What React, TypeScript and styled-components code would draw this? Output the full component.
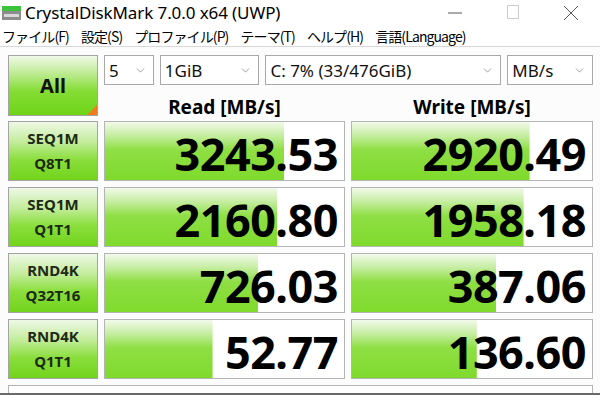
import styled, { createGlobalStyle } from 'styled-components'
import { ChevronDown } from 'lucide-react'

const GlobalStyle = createGlobalStyle`
    html, body {
        margin: 0;
        padding: 0;
        background: #fff;
    }

    body {
        font-family: "Noto Sans", "Noto Sans CJK JP", sans-serif;
        color: #000;
    }
`

const Window = styled.div`
    width: 600px;
    height: 395px;
    overflow: hidden;
    box-sizing: border-box;
    border-bottom: 2px solid #6a6a6a;
    background: #fcfcfc;
    display: flex;
    flex-direction: column;
`

const TitleBar = styled.div`
    height: 26px;
    display: flex;
    align-items: center;
    background: #fff;
    padding-left: 2px;
`

const AppIcon = styled.svg`
    width: 19px;
    height: 16px;
    margin-right: 4px;
`

const Title = styled.div`
    flex: 1;
    font-size: 17px;
    line-height: 26px;
    letter-spacing: -0.1px;
`

const WinButton = styled.div`
    width: 58px;
    height: 26px;
    display: flex;
    align-items: center;
    justify-content: center;
`

const MenuBar = styled.div`
    height: 23px;
    display: flex;
    align-items: center;
    gap: 12px;
    padding-left: 2px;
    background: #fff;
    border-bottom: 1px solid #d8d8d8;
    font-family: "Noto Sans CJK JP", "Noto Sans", sans-serif;
    font-size: 14px;
    letter-spacing: -0.9px;
`

const Content = styled.div`
    padding: 8px 7px 0 8px;
    display: grid;
    grid-template-columns: 90px 241px 242px;
    grid-auto-rows: 60px;
    column-gap: 6px;
    row-gap: 6px;
`

const AllButton = styled.div`
    position: relative;
    height: 61px;
    box-sizing: border-box;
    border: 1px solid #a4a4a4;
    background: linear-gradient(to bottom, #f0f9e8 0%, #bdeb91 30%, #84dc34 60%, #6fd418 100%);
    display: flex;
    align-items: center;
    justify-content: center;
    font-weight: 700;
    font-size: 20px;
    color: #111;
`

const Corner = styled.div`
    position: absolute;
    right: 0;
    bottom: 0;
    width: 0;
    height: 0;
    border-left: 10px solid transparent;
    border-bottom: 10px solid #f07a1e;
`

const ControlArea = styled.div`
    grid-column: span 2;
    display: flex;
    flex-direction: column;
`

const Selects = styled.div`
    display: flex;
    gap: 6px;
    height: 30px;
`

const Select = styled.div<{ $w: number }>`
    width: ${(p) => p.$w}px;
    height: 30px;
    box-sizing: border-box;
    border: 1px solid #a8a8a8;
    background: #fff;
    display: flex;
    align-items: center;
    justify-content: space-between;
    padding: 0 6px 0 4px;
    font-size: 17px;
    color: #111;
`

const Headers = styled.div`
    flex: 1;
    display: grid;
    grid-template-columns: 241px 242px;
    column-gap: 6px;
    align-items: end;
`

const Header = styled.div`
    text-align: center;
    font-weight: 700;
    font-size: 19px;
    line-height: 22px;
    margin-bottom: -3px;
`

const Label = styled.div`
    box-sizing: border-box;
    border: 1px solid #a4a4a4;
    background: linear-gradient(to bottom, #eef8e6 0%, #c2ec9a 35%, #8ade3c 65%, #72d41c 100%);
    display: flex;
    flex-direction: column;
    align-items: center;
    justify-content: center;
    font-weight: 700;
    font-size: 15px;
    line-height: 25px;
    color: #1c2a14;
`

const Result = styled.div`
    box-sizing: border-box;
    border: 1px solid #b4b4b4;
    background-color: #fff;
    background-image: linear-gradient(to bottom, #f2faea 0%, #c8eea6 22%, #8fdf44 48%, #7fda2c 100%);
    background-repeat: no-repeat;
    background-position: left top;
    display: flex;
    align-items: center;
    justify-content: flex-end;
    padding: 5px 6px 0 0;
    font-weight: 700;
    font-size: 45px;
    letter-spacing: -0.5px;
    color: #000;
`

const Comment = styled.div`
    grid-column: span 3;
    border: 1px solid #b4b4b4;
    background: #fff;
`

const rows = [
    { a: 'SEQ1M', b: 'Q8T1', read: '3243.53', rp: 75, write: '2920.49', wp: 74 },
    { a: 'SEQ1M', b: 'Q1T1', read: '2160.80', rp: 72, write: '1958.18', wp: 71.5 },
    { a: 'RND4K', b: 'Q32T16', read: '726.03', rp: 64, write: '387.06', wp: 60 },
    { a: 'RND4K', b: 'Q1T1', read: '52.77', rp: 45, write: '136.60', wp: 52 },
]

const menu = ['ファイル(F)', '設定(S)', 'プロファイル(P)', 'テーマ(T)', 'ヘルプ(H)', '言語(Language)']

const Chevron = () => <ChevronDown size={13} color="#8a8a8a" strokeWidth={1.5} />

const App = () => {
    return <>
        <GlobalStyle />
        <Window>
            <TitleBar>
                <AppIcon viewBox="0 0 19 16">
                    <rect x="0" y="1" width="19" height="5" fill="#3cc23c" />
                    <rect x="0" y="6" width="19" height="9" fill="#8c8c8c" />
                    <rect x="2" y="9" width="15" height="3" fill="#d8d8d8" />
                </AppIcon>
                <Title>CrystalDiskMark 7.0.0 x64 (UWP)</Title>
                <WinButton>
                    <svg width="16" height="16" viewBox="0 0 16 16"><line x1="1" y1="8" x2="15" y2="8" stroke="#555" strokeWidth="1" /></svg>
                </WinButton>
                <WinButton>
                    <svg width="14" height="16" viewBox="0 0 14 16"><rect x="1.5" y="0.5" width="11" height="13" fill="none" stroke="#ccc" strokeWidth="1" /></svg>
                </WinButton>
                <WinButton>
                    <svg width="16" height="16" viewBox="0 0 16 16"><path d="M1 1 L15 15 M15 1 L1 15" stroke="#555" strokeWidth="1" /></svg>
                </WinButton>
            </TitleBar>
            <MenuBar>
                {menu.map((m) => <span key={m}>{m}</span>)}
            </MenuBar>
            <Content>
                <AllButton>
                    All
                    <Corner />
                </AllButton>
                <ControlArea>
                    <Selects>
                        <Select $w={50}>5<Chevron /></Select>
                        <Select $w={100}>1GiB<Chevron /></Select>
                        <Select $w={237}>C: 7% (33/476GiB)<Chevron /></Select>
                        <Select $w={86}>MB/s<Chevron /></Select>
                    </Selects>
                    <Headers>
                        <Header>Read [MB/s]</Header>
                        <Header>Write [MB/s]</Header>
                    </Headers>
                </ControlArea>
                {rows.map((r) => <>
                    <Label key={r.a + r.b}><span>{r.a}</span><span>{r.b}</span></Label>
                    <Result style={{ backgroundSize: `${r.rp}% 100%` }}>{r.read}</Result>
                    <Result style={{ backgroundSize: `${r.wp}% 100%` }}>{r.write}</Result>
                </>)}
                <Comment />
            </Content>
        </Window>
    </>
}

export default App
